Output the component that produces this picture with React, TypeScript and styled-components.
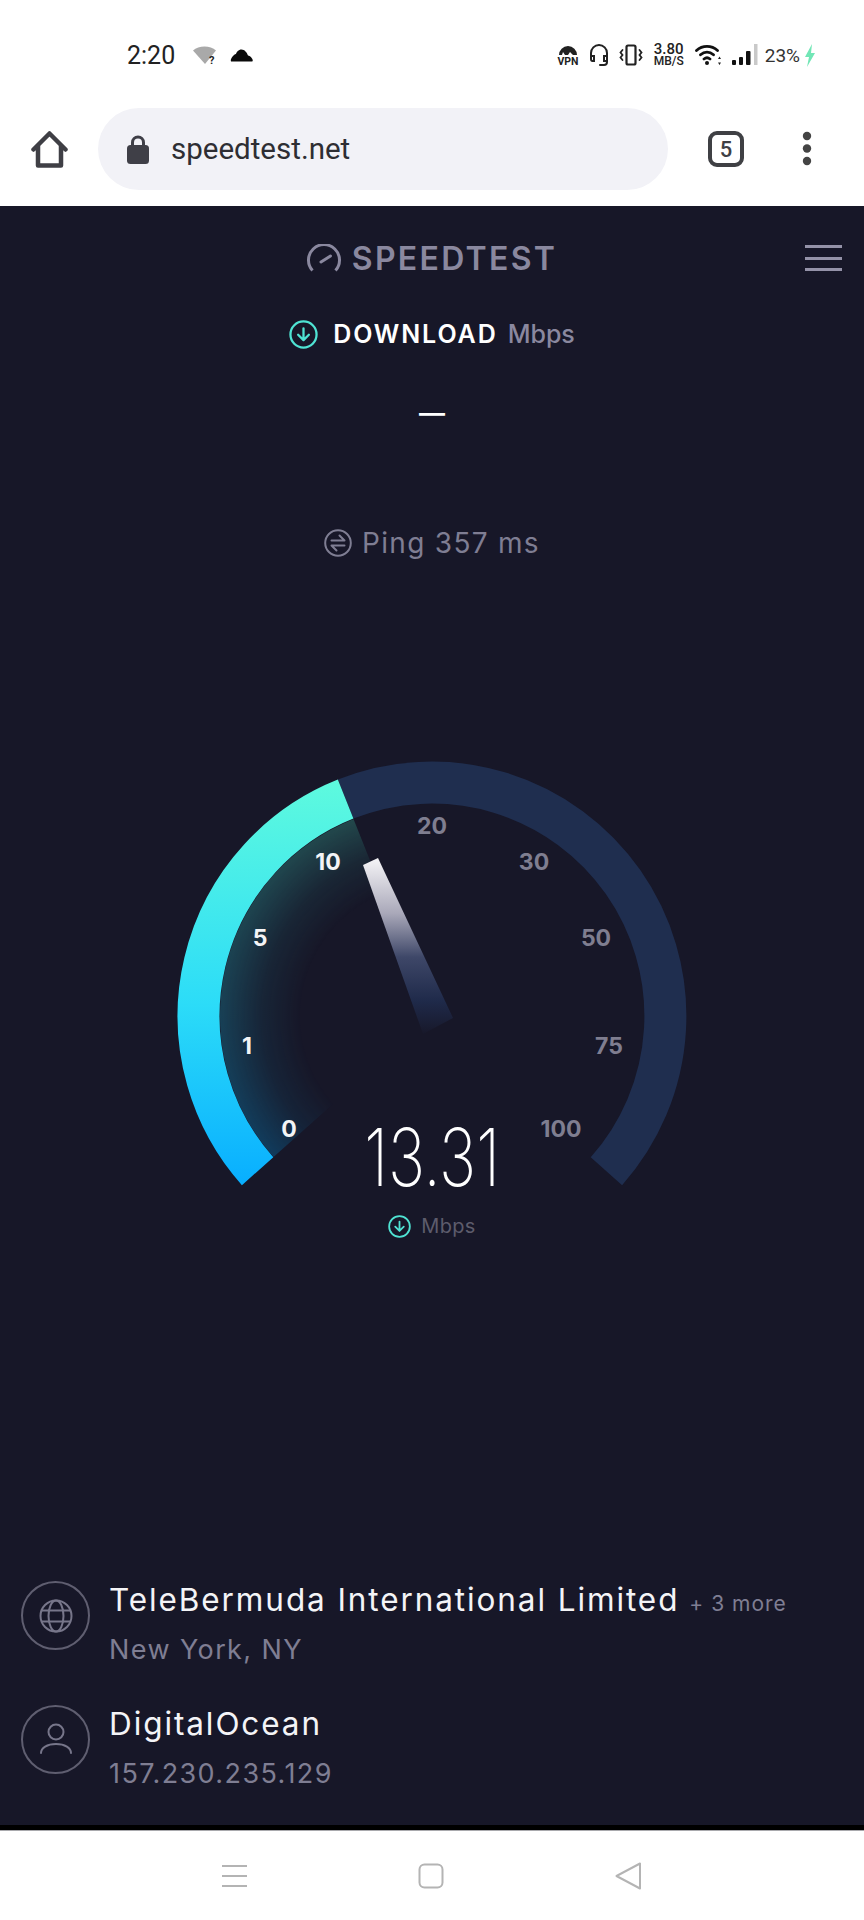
import React from 'react';
import styled, { createGlobalStyle } from 'styled-components';

const Global = createGlobalStyle`
	html, body {
		margin: 0;
		padding: 0;
		background: #fff;
	}
`;

const Page = styled.div`
	width: 864px;
	height: 1920px;
	display: flex;
	flex-direction: column;
	overflow: hidden;
	background: #fff;
	font-family: Inter, 'Liberation Sans', sans-serif;
`;

const StatusBar = styled.div`
	height: 84px;
	padding: 26px 48px 0 127px;
	box-sizing: border-box;
	display: flex;
	justify-content: space-between;
	align-items: center;
	flex: none;
`;

const StatusLeft = styled.div`
	display: flex;
	align-items: center;
	gap: 13px;
`;

const StatusRight = styled.div`
	display: flex;
	align-items: center;
	gap: 10px;
`;

const Time = styled.span`
	font: 400 25px Roboto, sans-serif;
	color: #222;
	margin-right: 5px;
`;

const NetSpeed = styled.div`
	display: flex;
	flex-direction: column;
	align-items: center;
	width: 32px;
	color: #222;
`;

const NetValue = styled.span`
	font: 500 15px/13px Roboto, sans-serif;
`;

const NetUnit = styled.span`
	font: 500 12px/11px Roboto, sans-serif;
`;

const Battery = styled.span`
	font: 400 19px Roboto, sans-serif;
	color: #333;
	margin: 0 -6px 0 -3px;
`;

const BrowserBar = styled.div`
	height: 122px;
	padding: 8px 0 0 31px;
	box-sizing: border-box;
	display: flex;
	align-items: center;
	flex: none;
`;

const UrlPill = styled.div`
	width: 570px;
	height: 82px;
	margin-left: 30px;
	padding-left: 29px;
	box-sizing: border-box;
	border-radius: 41px;
	background: #f2f2f7;
	display: flex;
	align-items: center;
	gap: 22px;
`;

const UrlText = styled.span`
	font: 400 29.500px Roboto, sans-serif;
	color: #2e2e33;
`;

const TabCount = styled.div`
	width: 36px;
	height: 36px;
	margin-left: 40px;
	box-sizing: border-box;
	border: 4px solid #3f4044;
	border-radius: 9px;
	display: flex;
	align-items: center;
	justify-content: center;
	font: 500 22px 'Roboto', sans-serif;
	color: #3f4044;
`;

const MoreDots = styled.svg`
	width: 10px;
	height: 36px;
	margin-left: 58px;
`;

const Main = styled.main`
	flex: 1;
	background: #171728;
	border-bottom: 5px solid #000;
	display: flex;
	flex-direction: column;
	align-items: center;
`;

const Header = styled.header`
	width: 100%;
	height: 104px;
	display: grid;
	grid-template-columns: 1fr auto 1fr;
	align-items: center;
`;

const Brand = styled.div`
	grid-column: 2;
	display: flex;
	align-items: center;
	gap: 11px;
`;

const BrandName = styled.span`
	font-size: 32px;
	font-weight: 600;
	color: #8a889f;
	letter-spacing: 2.300px;
`;

const Burger = styled.div`
	justify-self: end;
	width: 37px;
	margin-right: 22px;
	display: flex;
	flex-direction: column;
	gap: 8.500px;
`;

const BurgerLine = styled.span`
	height: 3px;
	background: #9492a8;
`;

const SpeedRow = styled.div`
	height: 48px;
	display: flex;
	align-items: center;
	font-size: 25px;
`;

const SpeedLabel = styled.span`
	margin-left: 15px;
	color: #fff;
	font-weight: 600;
	letter-spacing: 1.900px;
`;

const SpeedUnit = styled.span`
	margin-left: 10px;
	color: #8a889f;
	font-weight: 500;
`;

const Dash = styled.div`
	margin-top: 32px;
	height: 46px;
	font-size: 26px;
	font-weight: 600;
	line-height: 46px;
	color: #fff;
`;

const PingRow = styled.div`
	margin-top: 89px;
	height: 36px;
	display: flex;
	align-items: center;
	gap: 10px;
	font-size: 28px;
	letter-spacing: 1.300px;
	color: #7f7e93;
`;

const GaugeWrap = styled.div`
	position: relative;
	width: 864px;
	height: 480px;
	margin-top: 200px;
	flex: none;
`;

const GaugeSvg = styled.svg`
	display: block;
`;

const Tick = styled.text<{ $on?: boolean }>`
	font-family: Inter, sans-serif;
	font-size: 23px;
	font-weight: 700;
	text-anchor: middle;
	dominant-baseline: central;
	fill: ${(p) => (p.$on ? '#f4f4f6' : '#7f7e90')};
`;

const Readout = styled.div`
	position: absolute;
	left: 0;
	right: 0;
	top: 351px;
	display: flex;
	flex-direction: column;
	align-items: center;
`;

const Value = styled.div`
	font-size: 80px;
	font-weight: 200;
	line-height: 90px;
	color: #fff;
	transform: scaleX(0.78);
`;

const ValueUnit = styled.div`
	margin-top: 12px;
	display: flex;
	align-items: center;
	gap: 10px;
	font-size: 20px;
	letter-spacing: 0.300px;
	color: #5d5c6c;
`;

const Providers = styled.div`
	margin-top: auto;
	width: 100%;
	padding: 0 0 35px 21px;
	box-sizing: border-box;
	display: flex;
	flex-direction: column;
	gap: 39px;
`;

const Provider = styled.div`
	display: flex;
	align-items: flex-start;
	gap: 19px;
`;

const ProviderBadge = styled.div`
	width: 69px;
	height: 69px;
	box-sizing: border-box;
	border: 2px solid #5f5e70;
	border-radius: 50%;
	display: flex;
	align-items: center;
	justify-content: center;
	flex: none;
`;

const ProviderInfo = styled.div`
	padding-top: 1px;
	display: flex;
	flex-direction: column;
	gap: 16px;
`;

const ProviderTitle = styled.div`
	font-size: 31.500px;
	line-height: 36px;
	color: #f4f4f7;
	letter-spacing: 1.900px;
	white-space: nowrap;
`;

const ProviderMore = styled.span`
	margin-left: 10px;
	font-size: 21px;
	line-height: 1;
	color: #7f7e93;
	letter-spacing: 1px;
`;

const ProviderSub = styled.div`
	font-size: 27px;
	line-height: 32px;
	color: #7f7e93;
	letter-spacing: 1.400px;
`;

const NavBar = styled.nav`
	height: 90px;
	border-top: 1px solid #a9a9ad;
	box-sizing: border-box;
	padding: 0 222px;
	display: flex;
	justify-content: space-between;
	align-items: center;
	flex: none;
`;

const CX = 432;
const CY = 255;
const R = 233.500;
const START = Math.atan2(170, -191);
const SPLIT = Math.atan2(-236, -94);
const END = Math.atan2(170, 191);

function pt(r: number, a: number): string {
	return `${(CX + r * Math.cos(a)).toFixed(1)} ${(CY + r * Math.sin(a)).toFixed(1)}`;
}

const ticks = [
	{ t: '0', x: 289, y: 368, on: true },
	{ t: '1', x: 247, y: 285, on: true },
	{ t: '5', x: 260, y: 177, on: true },
	{ t: '10', x: 328, y: 101, on: true },
	{ t: '20', x: 432, y: 65 },
	{ t: '30', x: 534, y: 101 },
	{ t: '50', x: 596, y: 177 },
	{ t: '75', x: 609, y: 285 },
	{ t: '100', x: 561, y: 368 },
];

function DownIcon({ size }: { size: number }) {
	return (
		<svg width={size} height={size} viewBox="0 0 28 28" fill="none" stroke="#4fe3d3" strokeLinecap="round" strokeLinejoin="round">
			<circle cx="14" cy="14" r="12.600" strokeWidth="2.200" />
			<path d="M14 8v11M8.800 14.200 14 19.400l5.200-5.200" strokeWidth="2.200" />
		</svg>
	);
}

function Gauge() {
	return (
		<GaugeSvg width="864" height="480" viewBox="0 0 864 480">
			<defs>
				<linearGradient id="arcFill" gradientUnits="userSpaceOnUse" x1="0" y1="425" x2="0" y2="20">
					<stop offset="0" stopColor="#08aeff" />
					<stop offset="0.45" stopColor="#2cdcf8" />
					<stop offset="1" stopColor="#5efade" />
				</linearGradient>
				<linearGradient id="glowFill" gradientUnits="userSpaceOnUse" x1="0" y1="400" x2="0" y2="60">
					<stop offset="0" stopColor="#0a5f92" />
					<stop offset="1" stopColor="#2f7a70" />
				</linearGradient>
				<radialGradient id="glowFade" gradientUnits="userSpaceOnUse" cx={CX} cy={CY} r="212">
					<stop offset="0.62" stopColor="#000" />
					<stop offset="0.8" stopColor="#2a2a2a" />
					<stop offset="1" stopColor="#808080" />
				</radialGradient>
				<mask id="glowMask" maskUnits="userSpaceOnUse" x="0" y="0" width="864" height="480">
					<circle cx={CX} cy={CY} r="212" fill="url(#glowFade)" />
				</mask>
				<linearGradient id="needleFill" gradientUnits="userSpaceOnUse" x1="0" y1="100" x2="0" y2="275">
					<stop offset="0" stopColor="#f2f1f4" />
					<stop offset="0.3" stopColor="#a9a8b9" />
					<stop offset="0.55" stopColor="#3e4768" />
					<stop offset="0.8" stopColor="#1f2a4a" />
					<stop offset="1" stopColor="#171728" />
				</linearGradient>
			</defs>
			<path
				d={`M${CX} ${CY}L${pt(214, START)}A214 214 0 0 1 ${pt(214, SPLIT)}Z`}
				fill="url(#glowFill)"
				mask="url(#glowMask)"
			/>
			<path d={`M${pt(R, SPLIT)}A${R} ${R} 0 0 1 ${pt(R, END)}`} fill="none" stroke="#1f2e4f" strokeWidth="42" />
			<path d={`M${pt(R, START)}A${R} ${R} 0 0 1 ${pt(R, SPLIT)}`} fill="none" stroke="url(#arcFill)" strokeWidth="42" />
			<polygon points="363,104 378,97 453,257 423,273" fill="url(#needleFill)" />
			{ticks.map((k) => (
				<Tick key={k.t} x={k.x} y={k.y} $on={k.on}>
					{k.t}
				</Tick>
			))}
		</GaugeSvg>
	);
}

export default function App(): JSX.Element {
	return (
		<Page>
			<Global />
			<StatusBar>
				<StatusLeft>
					<Time>2:20</Time>
					<svg width="24" height="19" viewBox="0 0 24 19">
						<path d="M0 4.500C3 2 7 .5 11.500 .5S20 2 23 4.500L12 18Z" fill="#a9a9a9" />
						<text x="16" y="17.500" fontFamily="Roboto" fontWeight="700" fontSize="11" fill="#222">?</text>
					</svg>
					<svg width="23" height="14" viewBox="0 0 23 14">
						<path d="M1 13.500h21c1 0 1-1.500 0-3-1-2-3-3-4-3-1-3-3.500-6-6.500-6S6.500 4 6 6C3.500 6.500 0 11 1 13.500Z" fill="#0a0a0a" />
					</svg>
				</StatusLeft>
				<StatusRight>
					<svg width="22" height="25" viewBox="0 0 22 25">
						<path d="M2 12a9 9 0 0 1 18 0h-4l-3-3-2 3H8L6 9l-1 3Z" fill="#222" />
						<text x="11" y="22" textAnchor="middle" fontFamily="Roboto" fontWeight="700" fontSize="10.500" fill="#222">VPN</text>
					</svg>
					<svg width="20" height="22" viewBox="0 0 20 22" fill="none" stroke="#222" strokeWidth="2" strokeLinecap="round">
						<path d="M2 13V9a8 8 0 0 1 16 0v9c0 2-1 3-3 3h-4" />
						<path d="M2 12h3v5H3.500C2.500 17 2 16 2 15ZM18 12h-3v5h3Z" />
					</svg>
					<svg width="24" height="22" viewBox="0 0 24 22" fill="none" stroke="#222" strokeWidth="1.800" strokeLinecap="round">
						<rect x="7.500" y="1.500" width="9" height="19" rx="1.500" strokeWidth="2.200" />
						<path d="M3.500 6 1.500 8.500l2 2.500-2 2.500 2 2.500M20.500 6l2 2.500-2 2.500 2 2.500-2 2.500" />
					</svg>
					<NetSpeed>
						<NetValue>3.80</NetValue>
						<NetUnit>MB/S</NetUnit>
					</NetSpeed>
					<svg width="27" height="22" viewBox="0 0 27 22" fill="none" stroke="#111" strokeWidth="2.800" strokeLinecap="round">
						<path d="M1.500 6.500c6-5.500 15-5.500 21 0M5.500 10.800c4-3.500 9-3.500 13 0M9 15c2-1.600 4-1.600 6 0" />
						<circle cx="12" cy="19" r="2" fill="#111" stroke="none" />
						<path d="M24.500 12.500 26 15h-3ZM24.500 21 23 18.500h3Z" fill="#222" stroke="none" />
					</svg>
					<svg width="26" height="22" viewBox="0 0 26 22">
						<rect x="0" y="16" width="4" height="5" rx="1" fill="#111" />
						<rect x="7" y="13" width="4" height="8" rx="1" fill="#111" />
						<rect x="14" y="7" width="4.500" height="14" rx="1" fill="#111" />
						<rect x="22" y="0" width="3.500" height="21" fill="#c9c9c9" />
					</svg>
					<Battery>23%</Battery>
					<svg width="12" height="23" viewBox="0 0 12 23">
						<path d="M8 0 1 13h4l-2 10 8-14H7Z" fill="#72e6b6" />
					</svg>
				</StatusRight>
			</StatusBar>

			<BrowserBar>
				<svg width="37" height="37" viewBox="0 0 37 37" fill="none" stroke="#3f3f45" strokeWidth="4.500" strokeLinecap="round" strokeLinejoin="round">
					<path d="M2.500 18.500 18.500 2.500l16 16" />
					<path d="M7 15v19.500h23V15" />
				</svg>
				<UrlPill>
					<svg width="22" height="29" viewBox="0 0 22 29">
						<path d="M5.500 11V7.500a5.500 5.500 0 0 1 11 0V11" fill="none" stroke="#3f3f47" strokeWidth="3" />
						<rect x="0" y="10" width="22" height="19" rx="3.500" fill="#3f3f47" />
					</svg>
					<UrlText>speedtest.net</UrlText>
				</UrlPill>
				<TabCount>5</TabCount>
				<MoreDots viewBox="0 0 10 36">
					<circle cx="5" cy="5" r="4.200" fill="#444" />
					<circle cx="5" cy="17.500" r="4.200" fill="#444" />
					<circle cx="5" cy="30" r="4.200" fill="#444" />
				</MoreDots>
			</BrowserBar>

			<Main>
				<Header>
					<Brand>
						<svg width="34" height="28" viewBox="0 0 34 28" fill="none" stroke="#8a889f" strokeWidth="3" strokeLinecap="round">
							<path d="M5.500 26.500A15.500 15.500 0 1 1 28.500 26.500" strokeLinecap="butt" />
							<path d="M14 18l9.500-6" />
						</svg>
						<BrandName>SPEEDTEST</BrandName>
					</Brand>
					<Burger>
						<BurgerLine />
						<BurgerLine />
						<BurgerLine />
					</Burger>
				</Header>

				<SpeedRow>
					<DownIcon size={29} />
					<SpeedLabel>DOWNLOAD</SpeedLabel>
					<SpeedUnit>Mbps</SpeedUnit>
				</SpeedRow>

				<Dash>—</Dash>

				<PingRow>
					<svg width="28" height="28" viewBox="0 0 28 28" fill="none" stroke="#7f7e93" strokeWidth="2" strokeLinecap="round" strokeLinejoin="round">
						<circle cx="14" cy="14" r="12.800" />
						<path d="M7.500 11.500h13L15.500 6.500M20.500 16.500h-13l5 5" />
					</svg>
					Ping 357 ms
				</PingRow>

				<GaugeWrap>
					<Gauge />
					<Readout>
						<Value>13.31</Value>
						<ValueUnit>
							<DownIcon size={23} />
							Mbps
						</ValueUnit>
					</Readout>
				</GaugeWrap>

				<Providers>
					<Provider>
						<ProviderBadge>
							<svg width="34" height="34" viewBox="0 0 34 34" fill="none" stroke="#77768a" strokeWidth="2">
								<circle cx="17" cy="17" r="15.500" />
								<ellipse cx="17" cy="17" rx="7.500" ry="15.500" />
								<path d="M3 11.500h28M3 22.500h28" />
							</svg>
						</ProviderBadge>
						<ProviderInfo>
							<ProviderTitle>
								TeleBermuda International Limited
								<ProviderMore>+ 3 more</ProviderMore>
							</ProviderTitle>
							<ProviderSub>New York, NY</ProviderSub>
						</ProviderInfo>
					</Provider>
					<Provider>
						<ProviderBadge>
							<svg width="34" height="34" viewBox="0 0 34 34" fill="none" stroke="#77768a" strokeWidth="2" strokeLinecap="round">
								<circle cx="17" cy="9" r="7.500" />
								<path d="M2 30c0-5 6-9 15-9s15 4 15 9" />
							</svg>
						</ProviderBadge>
						<ProviderInfo>
							<ProviderTitle>DigitalOcean</ProviderTitle>
							<ProviderSub>157.230.235.129</ProviderSub>
						</ProviderInfo>
					</Provider>
				</Providers>
			</Main>

			<NavBar>
				<svg width="25" height="22" viewBox="0 0 25 22" stroke="#b4b4b4" strokeWidth="2">
					<path d="M0 1h25M0 11h25M0 21h25" />
				</svg>
				<svg width="26" height="26" viewBox="0 0 26 26" fill="none" stroke="#b4b4b4" strokeWidth="2">
					<rect x="1.500" y="1.500" width="23" height="23" rx="5" />
				</svg>
				<svg width="27" height="28" viewBox="0 0 27 28" fill="none" stroke="#b4b4b4" strokeWidth="2" strokeLinejoin="round">
					<path d="M1.500 14 25 1.500v25Z" />
				</svg>
			</NavBar>
		</Page>
	);
}
